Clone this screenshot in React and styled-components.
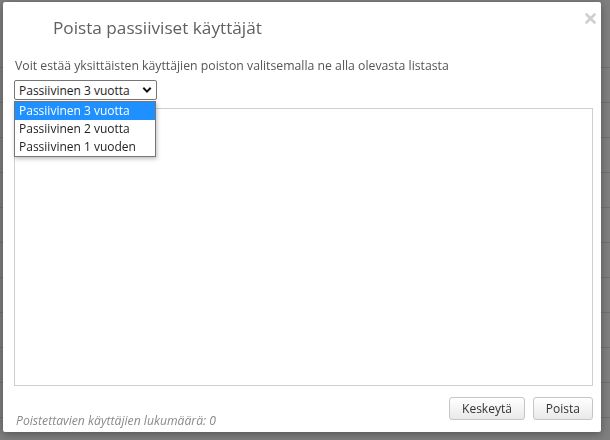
import React, { useState } from "react";
import styled, { createGlobalStyle } from "styled-components";

const GlobalStyle = createGlobalStyle`
  html, body {
    margin: 0;
    padding: 0;
    width: 610px;
    height: 440px;
    overflow: hidden;
    font-family: "Open Sans", "Noto Sans", sans-serif;
  }
`;

const OPTIONS = ["Passiivinen 3 vuotta", "Passiivinen 2 vuotta", "Passiivinen 1 vuoden"];

const Page = () => (
  <StPage>
    {Array.from({ length: 12 }).map((_, i) => (
      <StPageRow key={i} />
    ))}
  </StPage>
);

const App = () => {
  const [selected, setSelected] = useState(0);
  const [open, setOpen] = useState(true);

  return (
    <>
      <GlobalStyle />
      <Page />
      <StBackdrop>
        <StModal>
          <StHeader>
            <StTitle>Poista passiiviset käyttäjät</StTitle>
            <StClose aria-label="close">
              <svg width="11" height="11" viewBox="0 0 11 11">
                <path d="M1.5 1.5 L9.5 9.5 M9.5 1.5 L1.5 9.5" stroke="#cfcfcf" strokeWidth="2.6" strokeLinecap="round" />
              </svg>
            </StClose>
          </StHeader>

          <StText>Voit estää yksittäisten käyttäjien poiston valitsemalla ne alla olevasta listasta</StText>

          <StSelectWrap>
            <StSelect onClick={() => setOpen(!open)}>
              <span>{OPTIONS[selected]}</span>
              <svg width="10" height="8" viewBox="0 0 10 8">
                <path d="M1.3 1.8 L5 5.6 L8.7 1.8" fill="none" stroke="#111" strokeWidth="2" />
              </svg>
            </StSelect>
            {open && (
              <StMenu>
                {OPTIONS.map((o, i) => (
                  <StOption
                    key={o}
                    $active={i === selected}
                    onClick={() => {
                      setSelected(i);
                      setOpen(false);
                    }}
                  >
                    {o}
                  </StOption>
                ))}
              </StMenu>
            )}
          </StSelectWrap>

          <StList />

          <StFooter>
            <StCount>Poistettavien käyttäjien lukumäärä: 0</StCount>
            <StButtons>
              <StButton>Keskeytä</StButton>
              <StButton>Poista</StButton>
            </StButtons>
          </StFooter>
        </StModal>
      </StBackdrop>
    </>
  );
};

export default App;

const StPage = styled.div`
  width: 610px;
  height: 440px;
  background: #7f7f7f;
  display: flex;
  flex-direction: column;
  padding-top: 33px;
  box-sizing: border-box;
`;

const StPageRow = styled.div`
  height: 35px;
  flex-shrink: 0;
  border-bottom: 1px solid #707070;
  box-sizing: border-box;
`;

const StBackdrop = styled.div`
  position: fixed;
  inset: 0;
  padding: 2px 0 0 3px;
  box-sizing: border-box;
`;

const StModal = styled.div`
  width: 598px;
  height: 430px;
  background: #fff;
  border-radius: 2px;
  box-shadow: 0 2px 8px rgba(0, 0, 0, 0.35);
  box-sizing: border-box;
  padding: 0 8px 4px 11px;
  display: flex;
  flex-direction: column;
`;

const StHeader = styled.div`
  height: 50px;
  display: flex;
  align-items: center;
  justify-content: space-between;
  padding-left: 39px;
`;

const StTitle = styled.h2`
  margin: 0;
  font-size: 17.2px;
  font-weight: 400;
  color: #606060;
`;

const StClose = styled.div`
  display: flex;
  align-items: center;
  margin-top: -18px;
  margin-right: -3px;
`;

const StText = styled.div`
  margin-top: 6px;
  font-size: 12.25px;
  line-height: 16px;
  color: #555;
  padding-left: 1px;
`;

const StSelectWrap = styled.div`
  position: relative;
  margin-top: 6px;
  width: 143px;
`;

const StSelect = styled.div`
  height: 20px;
  box-sizing: border-box;
  border: 1px solid #767676;
  border-radius: 2px;
  background: #fff;
  display: flex;
  align-items: center;
  justify-content: space-between;
  padding: 0 4px 0 4px;
  font-size: 12px;
  color: #222;
  cursor: default;
`;

const StMenu = styled.div`
  position: absolute;
  top: 21px;
  left: 0;
  width: 142px;
  background: #fff;
  border: 1px solid #767676;
  box-sizing: border-box;
  box-shadow: 1px 2px 4px rgba(0, 0, 0, 0.25);
  z-index: 2;
`;

const StOption = styled.div`
  height: 18px;
  line-height: 18px;
  padding-left: 4px;
  font-size: 12px;
  color: ${(p) => (p.$active ? "#fff" : "#222")};
  background: ${(p) => (p.$active ? "#1e90ff" : "transparent")};
`;

const StList = styled.div`
  margin-top: 8px;
  height: 278px;
  border: 1px solid #cfcfcf;
  box-sizing: border-box;
`;

const StFooter = styled.div`
  flex: 1;
  display: flex;
  align-items: flex-end;
  justify-content: space-between;
`;

const StCount = styled.div`
  font-size: 12.2px;
  line-height: 14px;
  font-style: italic;
  color: #8a8a8a;
  padding-left: 2px;
`;

const StButtons = styled.div`
  display: flex;
  gap: 8px;
  margin-bottom: 8px;
`;

const StButton = styled.button`
  height: 23px;
  padding: 0 12px;
  font-family: "Open Sans", "Noto Sans", sans-serif;
  font-size: 12px;
  color: #333;
  background: linear-gradient(#ffffff, #e9e9e9);
  border: 1px solid #c6c6c6;
  border-radius: 3px;
  cursor: pointer;
`;
